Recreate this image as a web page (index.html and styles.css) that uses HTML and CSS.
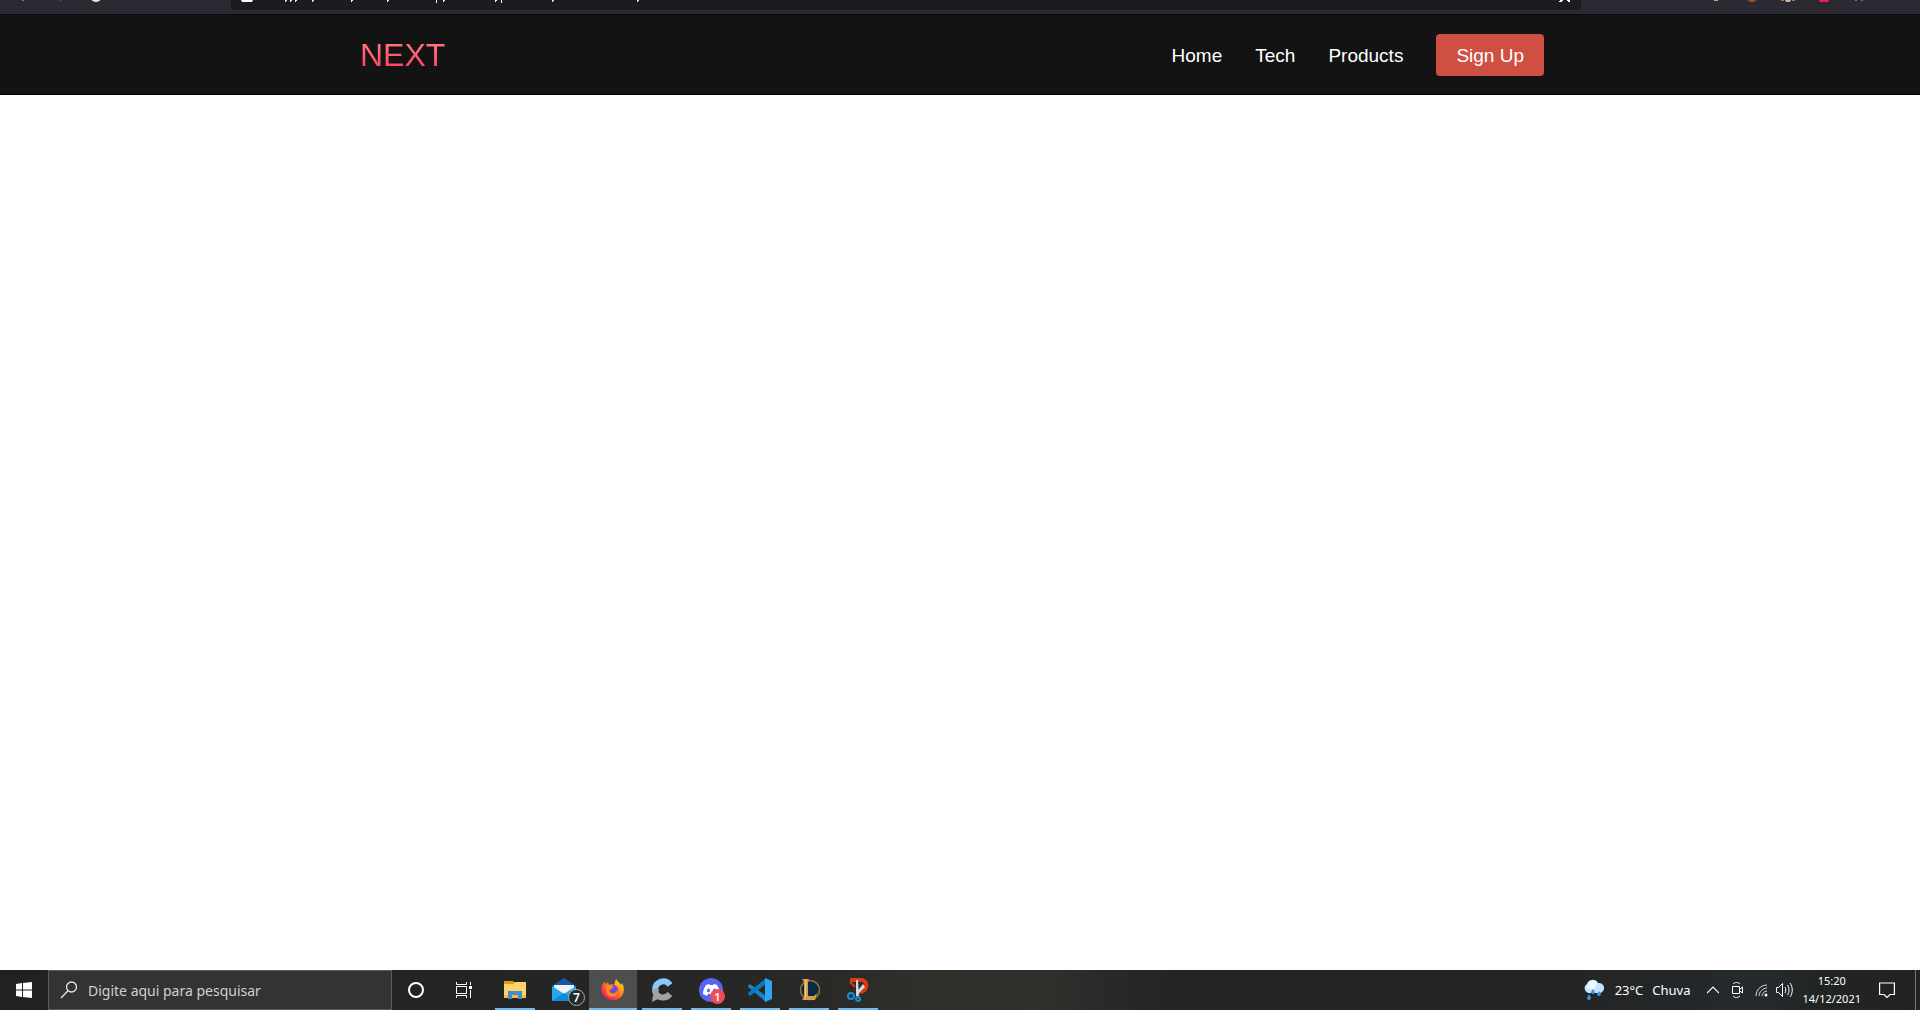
FILE: index.html
```html
<!DOCTYPE html>
<html lang="pt-BR">
<head>
<meta charset="utf-8">
<title>NEXT</title>
<link rel="stylesheet" href="styles.css">
</head>
<body>
<div class="browser-bar">
  <svg class="browser-nav" width="231" height="14" aria-hidden="true">
    <path d="M22 0h2v1h-2z" fill="#77767d"/><path d="M60 0h2v1h-2z" fill="#4a4952"/>
    <circle cx="96" cy="-4" r="5" fill="none" stroke="#e8e8ee" stroke-width="2"/>
  </svg>
  <div class="address">
    <svg width="420" height="10" aria-hidden="true">
      <path d="M10 0h12l-1 2H11z" fill="#fbfbfe"/>
      <path d="M54 0h2v1h-1v1h-1zM59 0h2v1h-1v1h-1zM64 0h2v1h-1v1h-1zM81 0h2v1h-1v1h-1zM120 0h2v1h-1v1h-1zM156 0h2v1h-1v1h-1zM205 0h1v3h-1zM212 0h2v1h-1v1h-1zM264 0h2v1h-1v1h-1zM270 0h1v3h-1zM321 0h2v1h-1v1h-1zM406 0h2v1h-1v1h-1z" fill="#fbfbfe"/>
    </svg>
    <svg width="22" height="10" aria-hidden="true"><path d="M1 0h3v1h-1v1H0V1h1zM8 0h3v2H9V1H8z" fill="#fbfbfe"/></svg>
  </div>
  <svg width="339" height="14" aria-hidden="true">
    <path d="M133 0h4v1h-4z" fill="#aaa9af"/>
    <path d="M166 0h10l-3 2h-4z" fill="#93501f"/>
    <path d="M200 0h3v1h-3zM211 0h3v1h-3z" fill="#c87124"/><path d="M204 0h6l-1 2h-4z" fill="#c4b5a6"/>
    <path d="M238 0h10l-1 2h-8z" fill="#f5194b"/>
    <path d="M274 0h2v1h-2zM280 0h2v1h-2z" fill="#77767d"/>
  </svg>
</div>

<header class="site-header">
  <nav class="site-nav">
    <a class="logo" href="#">NEXT</a>
    <div class="links">
      <a href="#">Home</a>
      <a href="#">Tech</a>
      <a href="#">Products</a>
      <button class="sign-up" type="button">Sign Up</button>
    </div>
  </nav>
</header>

<main class="content"></main>

<footer class="taskbar">
  <button class="task" type="button" aria-label="Iniciar">
    <svg width="16" height="16" viewBox="0 0 16 16"><path fill="#fff" d="M0 2l6-1v6.500H0zM7 1l9-1v7.500H7zM0 8.500h6V15l-6-1zM7 8.500h9V16l-9-1z"/></svg>
  </button>
  <label class="search">
    <svg width="18" height="18" viewBox="0 0 18 18" fill="none" stroke="#e4e4e4" stroke-width="1.300"><circle cx="11.500" cy="6" r="5"/><path d="M8 9.800L1 17"/></svg>
    <input type="text" aria-label="Pesquisar" placeholder="Digite aqui para pesquisar">
  </label>
  <button class="task" type="button" aria-label="Cortana">
    <svg width="18" height="18" viewBox="0 0 18 18"><circle cx="9" cy="9" r="7" fill="none" stroke="#fff" stroke-width="2"/></svg>
  </button>
  <button class="task" type="button" aria-label="Visão de tarefas">
    <svg width="16" height="16" viewBox="0 0 16 16" fill="none" stroke="#fff"><path d="M.5 0v2.500h10V0M.5 16v-2.500h10V16M.5 4.500h10v7H.5zM14.500 0v3M14.500 8v8"/><path d="M13 4h3v3h-3z" fill="#fff" stroke="none"/></svg>
  </button>
  <div class="apps">
    <button class="task open" type="button" aria-label="Explorador de Arquivos">
      <svg width="24" height="24" viewBox="0 0 24 24"><path d="M1 3h9l2 2v3H1z" fill="#e09b16"/><path d="M1 6h9l2-2h11v16H1z" fill="#ffd367"/><path d="M1 17h22v3H1z" fill="#f6bd45"/><path d="M5 21v-8h14v8h-4v-4H9v4z" fill="#3f8fd0"/></svg>
    </button>
    <button class="task" type="button" aria-label="E-mail">
      <svg width="24" height="24" viewBox="0 0 24 24"><path d="M0 8l12-8 12 8v4H0z" fill="#1259a8"/><path d="M2 7h20v9H2z" fill="#f2f2f2"/><path d="M0 8l12 8 12-8v15H0z" fill="#27a8ea"/><path d="M0 23L12 15l12 8z" fill="#1588d6"/></svg>
      <span class="count">7</span>
    </button>
    <button class="task open active" type="button" aria-label="Firefox">
      <svg width="24" height="24" viewBox="0 0 24 24"><defs><linearGradient id="fox" x1="1" y1="0" x2=".2" y2="1"><stop offset="0" stop-color="#fff44f"/><stop offset=".4" stop-color="#ff980e"/><stop offset=".75" stop-color="#ff3750"/><stop offset="1" stop-color="#e31587"/></linearGradient></defs><path d="M3 4l2 2 2-2 1 3 3-1 2 1 2-6c1 2 4 4 5 6l1-2c3 5 2 11-1 14-5 5-13 4-17-1C-1 13 0 8 3 4z" fill="url(#fox)"/><circle cx="12" cy="12" r="5" fill="#7542e5"/><path d="M5 8c3-2 6-1 8 1l-3 2c-2 1-2 3 0 4 3 1 5 0 6-3 3 7-8 10-11 3z" fill="#ff8a16"/></svg>
    </button>
    <button class="task open" type="button" aria-label="C">
      <svg width="24" height="24" viewBox="0 0 24 24" fill="none" stroke-width="6"><path d="M20 7C15 0 5 4 5 12" stroke="#87c9f8"/><path d="M5 11c0 9 10 11 15 5" stroke="#a0a3a6"/><path d="M3 17l-1 7 6-3z" fill="#a0a3a6"/><path d="M2 12l6-2 1 3-6 3z" fill="#a0a3a6"/></svg>
    </button>
    <button class="task open" type="button" aria-label="Discord">
      <svg width="24" height="24" viewBox="0 0 24 24"><circle cx="12" cy="12" r="12" fill="#5865f2"/><path d="M7 7l3-1 1 1h3l1-1 3 1c2 3 3 6 3 9l-4 2-1-2H9l-1 2-4-2c0-3 1-6 3-9z" fill="#fff"/><ellipse cx="9.500" cy="12.500" rx="1.500" ry="2" fill="#5865f2"/><ellipse cx="15.500" cy="12.500" rx="1.500" ry="2" fill="#5865f2"/></svg>
      <span class="count alert">1</span>
    </button>
    <button class="task open" type="button" aria-label="Visual Studio Code">
      <svg width="24" height="24" viewBox="0 0 24 24"><path d="M0 8l2-2 16 12v6L0 9z" fill="#1683ca"/><path d="M0 16l2 2L18 6V0L0 15z" fill="#0b78be"/><path d="M17 0l7 3v18l-7 3z" fill="#2ba6f2"/></svg>
    </button>
    <button class="task open" type="button" aria-label="League of Legends">
      <svg width="24" height="24" viewBox="0 0 24 24"><circle cx="13" cy="12" r="9.500" fill="#082b43" stroke="#9b7436" stroke-width="1.500"/><path d="M5 1h7l-1 3v14h6l3-3-2 7H5l2-3V4z" fill="#d99f50"/><path d="M8 2h1v18H8z" fill="#f5cf84"/></svg>
    </button>
    <button class="task open" type="button" aria-label="Ferramenta de Captura">
      <svg width="24" height="24" viewBox="0 0 24 24" fill="none"><path d="M4 2h8c7-1 9 3 8 7-1 4-4 5-7 5" stroke="#d83b12" stroke-width="4"/><path d="M4 4l5 5" stroke="#d83b12" stroke-width="2"/><path d="M10 2l2 0 1 16h-3zM17 6l2 3-6 6-3 3v-3z" fill="#d5d8da"/><circle cx="5" cy="18" r="3" stroke="#168bd8" stroke-width="2"/><circle cx="12" cy="21" r="2" stroke="#168bd8" stroke-width="2"/></svg>
    </button>
  </div>
  <div class="tray">
    <button class="weather" type="button">
      <svg width="22" height="22" viewBox="0 0 22 22"><path d="M5 14a5 5 0 0 1-1-9 6 6 0 0 1 11-1 5 5 0 1 1 2 10z" fill="#c3e4fa"/><path d="M5 5a5 5 0 0 1 9-1l-2 6H3z" fill="#edf7ff"/><path d="M10 10l-2 3a2 2 0 1 0 4 0zM16 12l-2 3a2 2 0 1 0 4 0zM6 15l-2 4a2 2 0 1 0 4 0z" fill="#3b94eb"/></svg>
      <span>23°C</span><span>Chuva</span>
    </button>
    <div class="status">
      <button type="button" aria-label="Mostrar ícones ocultos"><svg width="12" height="16" viewBox="0 0 12 16" fill="none" stroke="#fff" stroke-width="1.200"><path d="M0 11l6-6 6 6"/></svg></button>
      <button type="button" aria-label="Câmera"><svg width="12" height="16" viewBox="0 0 12 16" fill="none" stroke="#fff"><path d="M1.500 4.500h7v7h-7zM9 7l2.500-2v6L9 9M2 2c2-2 5-2 7 0M2 14c2 2 5 2 7 0"/></svg></button>
      <button type="button" aria-label="Rede"><svg width="13" height="16" viewBox="0 0 13 16" fill="none" stroke="#ddd"><path d="M1 14C1 8 6 3 12 3M4 14c0-4 4-8 8-8M7 14c0-2 2-5 5-5"/><circle cx="11" cy="13" r="1.500" fill="#fff" stroke="none"/></svg></button>
      <button type="button" aria-label="Volume"><svg width="17" height="16" viewBox="0 0 17 16" fill="none" stroke="#fff"><path d="M.5 5.500h2l4-4v13l-4-4h-2zM9 5c1 2 1 4 0 6M11.500 3c2 3 2 7 0 10M14 1c3 4 3 10 0 14"/></svg></button>
    </div>
    <button class="clock" type="button"><time>15:20</time><time>14/12/2021</time></button>
    <button class="notes" type="button" aria-label="Notificações"><svg width="16" height="17" viewBox="0 0 16 17" fill="none" stroke="#fff" stroke-width="1.200"><path d="M.6 1h14.800v11.500H11l-3 3-3-3H.6z"/></svg></button>
  </div>
</footer>
</body>
</html>
```
FILE: styles.css
```css
* { box-sizing: border-box; }

body {
  margin: 0;
  min-height: 100vh;
  display: flex;
  flex-direction: column;
  background: #fff;
  font-family: "Liberation Sans", Arial, sans-serif;
}

button {
  padding: 0;
  border: 0;
  background: none;
  color: #fff;
  font: inherit;
}

svg { display: block; flex: none; }

.browser-bar {
  display: flex;
  height: 14px;
  background: #2b2a33;
}

.address {
  flex: 1;
  display: flex;
  justify-content: space-between;
  height: 10px;
  background: #1c1b22;
  border-radius: 0 0 4px 4px;
}

.site-header {
  background: #131313;
  border-top: 1px solid #0b0b0d;
  border-bottom: 1px solid #000;
}

.site-nav {
  display: flex;
  align-items: center;
  justify-content: space-between;
  max-width: 1200px;
  height: 79px;
  margin: 0 auto;
  padding-right: 16px;
}

.logo {
  background: linear-gradient(to top, #ff0844 0%, #ffb199 100%);
  background-clip: text;
  color: transparent;
  font-size: 32px;
  line-height: 78px;
  text-decoration: none;
}

.links {
  display: flex;
  align-items: center;
  gap: 33px;
  font-size: 19px;
}

.links a { padding-top: 2px; color: #fff; text-decoration: none; }

.sign-up {
  height: 42px;
  padding: 2px 20px 0;
  border-radius: 4px;
  background: #cf4f43;
}

.content { flex: 1; }

.taskbar {
  display: flex;
  height: 40px;
  background: linear-gradient(to right, #202222 0%, #222524 25%, #282826 42%, #30302b 49%, #30302c 54%, #222524 61%, #232323 80%, #242a2d 92%, #212423 95%, #212322 100%);
  color: #fff;
  font-family: "Noto Sans", sans-serif;
}

.task {
  position: relative;
  display: flex;
  align-items: center;
  justify-content: center;
  width: 48px;
}

.search {
  display: flex;
  align-items: center;
  gap: 10px;
  width: 344px;
  padding: 0 11px;
  border: 1px solid #5b5b5b;
  background: #333;
}

.search input {
  flex: 1;
  min-width: 0;
  padding: 0;
  border: 0;
  outline: 0;
  background: none;
  color: #fff;
  font: 14px "Noto Sans", sans-serif;
}

.search input::placeholder { color: #d0d0d0; opacity: 1; }

.apps { display: flex; gap: 1px; margin-left: 3px; }

.open::after {
  content: "";
  position: absolute;
  right: 4px;
  bottom: 0;
  left: 4px;
  height: 2px;
  background: #76b9ed;
}

.active { background: #4d4e4e; }
.active::after { right: 0; left: 0; }

.count {
  position: absolute;
  right: 3px;
  bottom: 4px;
  width: 17px;
  height: 17px;
  border: 1px solid #aaa;
  border-radius: 50%;
  background: #272a2b;
  font-size: 12px;
  font-weight: 600;
  line-height: 15px;
  text-align: center;
}

.count.alert {
  right: 10px;
  bottom: 6px;
  width: 15px;
  height: 15px;
  border: 0;
  background: #ed4f59;
  font-size: 11px;
}

.tray {
  display: flex;
  align-items: center;
  margin-left: auto;
  padding-right: 4px;
}

.weather {
  display: flex;
  align-items: center;
  gap: 9px;
  font-size: 13px;
}

.weather svg { margin-right: 1px; }

.status { display: flex; gap: 12px; margin: 0 9px 0 17px; }
.status button:last-child { margin-left: -4px; }

.clock {
  display: flex;
  flex-direction: column;
  font-size: 11px;
  line-height: 18px;
  text-align: center;
}

.notes {
  display: flex;
  align-items: center;
  height: 40px;
  padding: 0 20px 0 18px;
  border-right: 1px solid #777;
}
```
